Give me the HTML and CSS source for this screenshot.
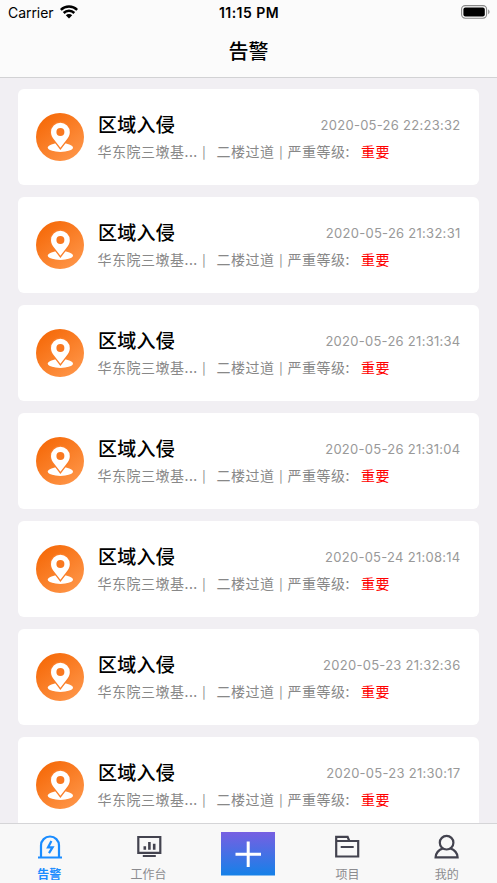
FILE: index.html
```
<!DOCTYPE html>
<html lang="zh-CN">
<head>
<meta charset="utf-8">
<title>告警</title>
<link rel="stylesheet" href="styles.css">
</head>
<body>
<svg class="defs" width="0" height="0">
  <defs>
    <linearGradient id="orange" x1="0.1" y1="0" x2="0.9" y2="1"><stop offset="0" stop-color="#f56604"/><stop offset="1" stop-color="#ff984c"/></linearGradient>
    <symbol id="pin" viewBox="0 0 48 48">
      <circle cx="24" cy="24" r="24" fill="url(#orange)"/>
      <ellipse cx="24.4" cy="34.5" rx="12.6" ry="4.4" fill="#fff"/>
      <path d="M24.4 9.8a9.4 9.4 0 0 0-9.4 9.4c0 3 1.3 5.2 3.2 7.6l6.2 8 6.2-8c1.9-2.4 3.2-4.6 3.2-7.6a9.4 9.4 0 0 0-9.4-9.4z" fill="#fff" stroke="#fb7e28" stroke-width="2.6" paint-order="stroke"/>
      <circle cx="24.4" cy="19" r="4" fill="#f97820"/>
    </symbol>
  </defs>
</svg>
<div class="app">
  <header class="header">
    <div class="status">
      <div class="carrier">Carrier
        <svg width="18" height="14" viewBox="0 0 18 14"><g fill="none" stroke="#000" stroke-width="2.5"><path d="M.8 4.9C5.3.4 12.7.4 17.2 4.9"/><path d="M3.7 8c2.9-2.9 7.7-2.9 10.6 0"/></g><path d="M5.8 10.3a4.5 4.5 0 0 1 6.4 0L9 13.5z"/></svg>
      </div>
      <div class="clock">11:15 PM</div>
      <svg class="battery" width="29" height="14" viewBox="0 0 29 14"><rect x=".6" y=".6" width="25" height="12.6" rx="3.6" fill="none" stroke="#888" stroke-width="1.1"/><rect x="2.4" y="2.4" width="21.4" height="9" rx="2" fill="#000"/><path d="M27.2 4.6c1.8.6 1.8 4 0 4.6z" fill="#888"/></svg>
    </div>
    <h1 class="title">告警</h1>
  </header>
  <main class="list">
    <article class="card"><svg class="icon"><use href="#pin"/></svg><div class="body"><div class="top"><h2>区域入侵</h2><time>2020-05-26 22:23:32</time></div><p><span class="site">华东院三墩基...</span><span class="bar">|</span><span class="place">二楼过道</span><span class="bar">|</span><span class="label">严重等级:</span><span class="level">重要</span></p></div></article>
    <article class="card"><svg class="icon"><use href="#pin"/></svg><div class="body"><div class="top"><h2>区域入侵</h2><time>2020-05-26 21:32:31</time></div><p><span class="site">华东院三墩基...</span><span class="bar">|</span><span class="place">二楼过道</span><span class="bar">|</span><span class="label">严重等级:</span><span class="level">重要</span></p></div></article>
    <article class="card"><svg class="icon"><use href="#pin"/></svg><div class="body"><div class="top"><h2>区域入侵</h2><time>2020-05-26 21:31:34</time></div><p><span class="site">华东院三墩基...</span><span class="bar">|</span><span class="place">二楼过道</span><span class="bar">|</span><span class="label">严重等级:</span><span class="level">重要</span></p></div></article>
    <article class="card"><svg class="icon"><use href="#pin"/></svg><div class="body"><div class="top"><h2>区域入侵</h2><time>2020-05-26 21:31:04</time></div><p><span class="site">华东院三墩基...</span><span class="bar">|</span><span class="place">二楼过道</span><span class="bar">|</span><span class="label">严重等级:</span><span class="level">重要</span></p></div></article>
    <article class="card"><svg class="icon"><use href="#pin"/></svg><div class="body"><div class="top"><h2>区域入侵</h2><time>2020-05-24 21:08:14</time></div><p><span class="site">华东院三墩基...</span><span class="bar">|</span><span class="place">二楼过道</span><span class="bar">|</span><span class="label">严重等级:</span><span class="level">重要</span></p></div></article>
    <article class="card"><svg class="icon"><use href="#pin"/></svg><div class="body"><div class="top"><h2>区域入侵</h2><time>2020-05-23 21:32:36</time></div><p><span class="site">华东院三墩基...</span><span class="bar">|</span><span class="place">二楼过道</span><span class="bar">|</span><span class="label">严重等级:</span><span class="level">重要</span></p></div></article>
    <article class="card"><svg class="icon"><use href="#pin"/></svg><div class="body"><div class="top"><h2>区域入侵</h2><time>2020-05-23 21:30:17</time></div><p><span class="site">华东院三墩基...</span><span class="bar">|</span><span class="place">二楼过道</span><span class="bar">|</span><span class="label">严重等级:</span><span class="level">重要</span></p></div></article>
  </main>
  <nav class="tabs">
    <a class="tab active">
      <svg width="26" height="26" viewBox="0 0 26 26" fill="none" stroke="#1a8cff" stroke-width="2.2"><path d="M1 23.5h24M4 23.5V11.5a9 9 0 0 1 18 0v12"/><path d="M14.4 7l-3.4 6.4h4.6l-3.6 5.8"/></svg>
      <span>告警</span>
    </a>
    <a class="tab">
      <svg width="26" height="26" viewBox="0 0 26 26" fill="none" stroke="#43434f" stroke-width="2.2"><path d="M2.3 3h22v15.8h-22zM6.8 22h13"/><path d="M8.8 15.8v-3.6M13.4 15.8V8M18.2 15.8v-6" stroke-width="2.6"/></svg>
      <span>工作台</span>
    </a>
    <a class="tab add">
      <svg width="54" height="44" viewBox="0 0 54 44"><defs><linearGradient id="blue" x1="0" y1="0" x2="0" y2="1"><stop offset="0" stop-color="#775fe2"/><stop offset="1" stop-color="#1581e8"/></linearGradient></defs><rect width="54" height="43.5" fill="url(#blue)"/><path d="M14.5 22.3h25.5M27.2 9.6v25.4" stroke="#fff" stroke-width="3"/></svg>
    </a>
    <a class="tab">
      <svg width="26" height="26" viewBox="0 0 26 26" fill="none" stroke="#43434f" stroke-width="2.2"><path d="M1.2 7h22v15.5h-22zM1.2 7V2.9h11.4l1.7 4.1M5.7 13h13"/></svg>
      <span>项目</span>
    </a>
    <a class="tab">
      <svg width="26" height="26" viewBox="0 0 26 26" fill="none" stroke="#43434f" stroke-width="2.2"><circle cx="12.6" cy="8.7" r="6.8"/><path d="M8.8 14.4C4.5 16 1.8 19.2 1.6 23.4h22c-.2-4.2-2.9-7.4-7.2-9"/></svg>
      <span>我的</span>
    </a>
  </nav>
</div>
</body>
</html>
```
FILE: styles.css
```
* { box-sizing: border-box; }
body { margin: 0; background: #f1eff3; font-family: Inter, "Noto Sans CJK SC", sans-serif; color: #000; }
h1, h2, p { margin: 0; }
svg { display: block; flex: none; }
.defs { position: absolute; }
.app { height: 883px; display: flex; flex-direction: column; overflow: hidden; }
.header { flex: none; height: 78px; background: #fbfbfb; border-bottom: 1px solid #d2d2d4; }
.status { height: 25px; display: grid; grid-template-columns: 1fr auto 1fr; align-items: center; padding: 0 7px 0 8px; }
.carrier { display: flex; align-items: center; gap: 6px; font-size: 14px; line-height: 16px; letter-spacing: -.05px; }
.carrier svg { margin-top: -1px; }
.clock { font-size: 14px; line-height: 16px; font-weight: 600; letter-spacing: .45px; }
.battery { justify-self: end; margin-top: -1px; }
.title { height: 52px; line-height: 52px; text-align: center; font-family: "Noto Sans CJK SC", sans-serif; font-size: 20px; font-weight: 500; }
.list { flex: 1; min-height: 0; overflow: hidden; padding: 11px 18px 0; }
.card { height: 96px; margin-bottom: 12px; padding: 0 18.5px 0 18px; border-radius: 6px; background: #fff; display: flex; align-items: center; }
.icon { width: 48px; height: 48px; margin-right: 14px; }
.body { flex: 1; min-width: 0; }
.top { display: flex; justify-content: space-between; align-items: center; height: 28px; }
h2 { font-family: "Noto Sans CJK SC", sans-serif; font-size: 19px; line-height: 28px; font-weight: 500; letter-spacing: .25px; }
time { font-size: 13px; letter-spacing: .27px; color: #999; padding-top: 1px; }
p { display: flex; height: 26px; line-height: 26px; font-family: "Noto Sans CJK SC", sans-serif; font-size: 14px; letter-spacing: .5px; color: #888; white-space: nowrap; }
.site { width: 104px; margin-left: -.5px; }
.bar { width: 5px; padding-top: 1.5px; text-align: center; font-family: Inter, sans-serif; font-size: 11.5px; letter-spacing: 0; }
.place { width: 62px; margin-left: 10px; }
.label { width: 68px; margin-left: 4px; }
.level { color: #f00; margin-left: 5.5px; }
.tabs { flex: none; height: 60px; display: grid; grid-template-columns: repeat(5, 1fr); background: #f8f8f8; border-top: 1px solid #d5d5d7; }
.tab { display: flex; flex-direction: column; align-items: center; padding-top: 10px; font-family: "Noto Sans CJK SC", sans-serif; font-size: 12px; line-height: 16px; color: #8b8b8f; }
.tab span { margin-top: 5.5px; margin-left: -1px; }
.active { color: #1a8cff; font-weight: 700; }
.add { padding-top: 8px; }
```
